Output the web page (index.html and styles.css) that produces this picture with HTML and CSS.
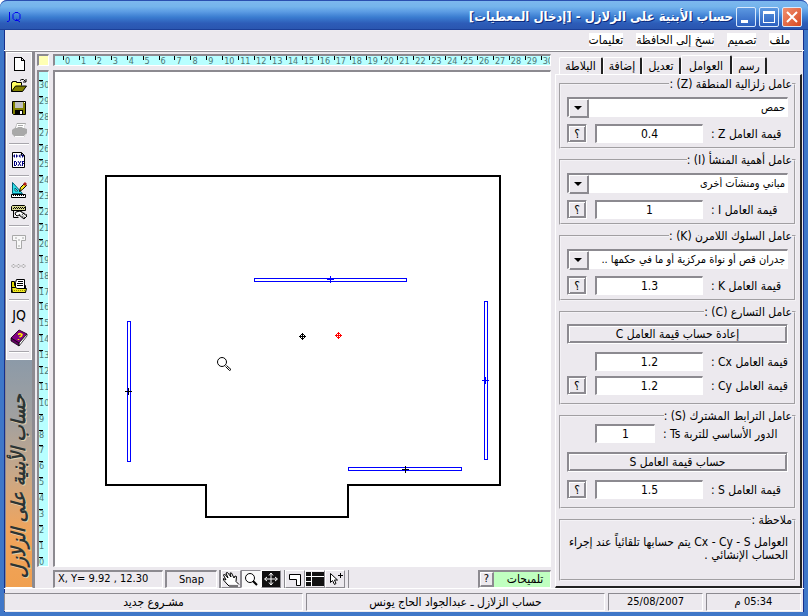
FILE: index.html
```html
<!DOCTYPE html>
<html lang="ar">
<head>
<meta charset="utf-8">
<title>حساب الأبنية على الزلازل</title>
<link rel="stylesheet" href="styles.css">
</head>
<body>
<div class="window">
  <header class="titlebar" dir="rtl">
    <div class="winbuttons">
      <button class="wb close" aria-label="إغلاق"><svg viewBox="0 0 18 18"><path d="M4 4l10 10M14 4L4 14" stroke="#fff" stroke-width="2"/></svg></button>
      <button class="wb" aria-label="تكبير"><svg viewBox="0 0 18 18"><path d="M3 3h12v12H3zM4 6h10v8H4z" fill="#fff" fill-rule="evenodd"/></svg></button>
      <button class="wb" aria-label="تصغير"><svg viewBox="0 0 18 18"><path d="M4 12h7v3H4z" fill="#fff"/></svg></button>
    </div>
    <h1>حساب الأبنية على الزلازل - [إدخال المعطيات]</h1>
    <svg class="logo" viewBox="0 0 16 14" fill="none" stroke="#0000f0"><path d="M3.500 2v8l-1 1.500H1M9 2.500h3l2 2v4l-2 2H9l-2-2v-4zM10 9l4 3"/></svg>
  </header>

  <nav class="menubar" dir="rtl">
    <button>ملف</button><button>تصميم</button><button>نسخ إلى الحافظة</button><button>تعليمات</button>
  </nav>

  <main class="main">
    <aside class="side">
      <div class="toolbar">
        <button aria-label="جديد"><svg viewBox="0 0 18 18" shape-rendering="crispEdges"><path d="M4.500 2.500h7l3 3v9.500h-10zM11.500 2.500v3h3" fill="#fff" stroke="#000"/></svg></button>
        <button aria-label="فتح"><svg viewBox="0 0 18 18"><path d="M1.500 14.500v-9h1v-1h4v1h5v3" fill="#ffff60" stroke="#000"/><path d="M1.500 14.500l4-5.500h11l-4 5.500z" fill="#808000" stroke="#000"/><path d="M10 3.500l1.500-1h2l2 2M16 2v3h-3" fill="none" stroke="#000"/></svg></button>
        <button aria-label="حفظ"><svg viewBox="0 0 18 18"><path d="M2.500 2.500h13v13h-12l-1-1z" fill="#808000" stroke="#000"/><path d="M5 3h8v6H5z" fill="#c0c0c0"/><path d="M5 11h8v4H5z" fill="#000"/><path d="M10 12h2v3h-2zM14 3h1v1h-1z" fill="#fff"/></svg></button>
        <button aria-label="طباعة" disabled><svg viewBox="0 0 18 18"><path d="M3 8l2-1 2-5h9l-2 5 3 1v5l-3 3H5l-3-3V9z" fill="#a9a9a9"/><path d="M7 3h8l-1 4H6z" fill="#fff"/><path d="M8 4.500h5M7.500 6.500h5" stroke="#a9a9a9"/><path d="M5 15.500h9l3-3" stroke="#fff" fill="none"/></svg></button>
        <hr>
        <button class="mid" aria-label="DXF"><svg viewBox="0 0 18 18"><path d="M2.500 1.500h9l3 3v12h-12z" fill="#fff" stroke="#000"/><path d="M11.500 1.500v3h3" fill="none" stroke="#000"/><path d="M3 5l2-2v4zM8 5L6 3v4zM8.500 5l2-2v4zM14 5l-2-2v4z" fill="#000080"/><path d="M4.500 10v5M4 10.500h2M4 14.500h2M6.500 11v3M8 10l3 5M11 10l-3 5M12.500 10v5M12 10.500h2M12 12.500h2" stroke="#000080"/></svg></button>
        <hr>
        <button aria-label="رسم"><svg viewBox="0 0 18 18"><path d="M2.500 1.500v11h10z" fill="#30e0e8" stroke="#006078"/><path d="M5 7v3h3z" fill="#fff" stroke="#006078"/><path d="M1.500 13.500h14v3h-14z" fill="#fff" stroke="#000"/><path d="M3.500 14v1M5.500 14v1M7.500 14v1M9.500 14v1M11.500 14v1M13.500 14v1" stroke="#000"/><path d="M9.500 10.500l1-4 4-4 2 2-4 4z" fill="#f0e020" stroke="#000"/><path d="M13 3l2-2 2 2-2 2z" fill="#b01818"/></svg></button>
        <button aria-label="تحرير"><svg viewBox="0 0 18 18"><path d="M1.500 3.500l1-1h12l1 1v4h-14z" fill="#d8d890" stroke="#000"/><path d="M3 5.500h12M4 4.500h11" stroke="#000" stroke-dasharray="1 1"/><path d="M3.500 8v6.500h5" fill="none" stroke="#000"/><path d="M6 9l4-1 7 5-3 3-5-4-2 1-2-2z" fill="#fff" stroke="#000"/><path d="M9 11l5 4M11 8l6 4M12 11l3 4" stroke="#000" stroke-dasharray="1 1"/></svg></button>
        <hr>
        <button class="mid" aria-label="نص" disabled><svg viewBox="0 0 18 18"><path d="M2.500 2.500h13v5h-4v8h-5v-8h-4z" fill="#f8f8f8" stroke="#a8a8a8"/><path d="M5 5h2M12 5h2M9 6v2M9 12v2" stroke="#a8a8a8"/></svg></button>
        <button class="short" aria-label="نقاط" disabled><svg viewBox="0 0 18 18"><g fill="none" stroke="#a8a8a8"><path d="M3 8.500h1l1 1v1l-1 1H3l-1-1v-1zM8 8.500h1l1 1v1l-1 1H8l-1-1v-1zM13 8.500h1l1 1v1l-1 1h-1l-1-1v-1z"/></g></svg></button>
        <button aria-label="مجلد"><svg viewBox="0 0 18 18"><path d="M1.500 15.500v-11h3v4h11v7z" fill="#e0d800" stroke="#000"/><path d="M6.500 2.500h8v9h-9v-6z" fill="#fff" stroke="#000"/><path d="M8 4.500h5M7 6.500h6M7 8.500h6" stroke="#000"/><path d="M2.500 15.500l-1-5h4l2 1h9l-1 4z" fill="#f0e820" stroke="#000"/><path d="M4 13.500h11" stroke="#908800" stroke-dasharray="1 1"/></svg></button>
        <hr>
        <button class="text">JQ</button>
        <button aria-label="تعليمات"><svg viewBox="0 0 18 18"><path d="M1 9l8-8 8 4-8 9z" fill="#800080" stroke="#300030"/><path d="M9 14l8-9v2l-8 10z" fill="#fff" stroke="#000" stroke-width=".7"/><path d="M1 9l8 5v3L1 12z" fill="#600060" stroke="#000" stroke-width=".7"/><path d="M8 5.500l2-1 2 1-.5 1.500-2 1M8.500 10v1" fill="none" stroke="#ffe800" stroke-width="1.500"/></svg></button>
        <hr>
      </div>
      <div class="banner"><svg viewBox="0 0 26 222"><text transform="translate(20 219) rotate(-90)" class="shade">حساب الأبنية على الزلازل</text><text transform="translate(19 218) rotate(-90)">حساب الأبنية على الزلازل</text></svg></div>
    </aside>

    <section class="work">
      <div class="corner"></div>
      <ol class="ruler hr"></ol>
      <ol class="ruler vr"></ol>
      <div class="canvas">
        <svg viewBox="55 72 495 494" shape-rendering="crispEdges" fill="none">
          <path d="M106 176H500V485H348V517H206V485H106Z" stroke="#000" stroke-width="2"/>
          <g stroke="#00f"><path d="M254.500 278.500h152v3h-152zM127.500 321.500h3v140h-3zM484.500 301.500h3v158h-3zM348.500 467.500h113v3h-113z"/><path d="M330.500 276v7M327 279.500h7M485.500 377v7M482 380.500h7"/></g>
          <path d="M128.500 388v7M125 391.500h7M405.500 466v7M402 469.500h7" stroke="#000"/>
          <path d="M302.500 333v7M299 336.500h7M301 334.500h3M301 338.500h3M300.500 335v3M304.500 335v3" stroke="#000"/>
          <path d="M338.500 332v7M335 335.500h7M337 333.500h3M337 337.500h3M336.500 334v3M340.500 334v3" stroke="#f00"/>
          <g stroke="#000" shape-rendering="auto"><circle cx="222" cy="362" r="4.500"/><path d="M225.500 366.500l4 4 1.500-1-4.500-4"/></g>
        </svg>
      </div>
      <div class="bottombar">
        <output class="sunk coords">X, Y= 9.92 , 12.30</output>
        <button class="sunk snap">Snap</button>
        <div class="tools">
          <button aria-label="تحريك"><svg viewBox="0 0 18 16"><path d="M5 13L1.500 9V7.500L4 9 1.500 4l1-1L6 7 4 2l1.500-.5L9 6 8 2h1.500L12 7l1-2 1.500.5-.5 5 3 3" fill="#fff" stroke="#000"/><path d="M5 13l2 2h9" stroke="#000" fill="none"/></svg></button>
          <button class="on" aria-label="تكبير"><svg viewBox="0 0 18 16"><circle cx="8" cy="7" r="4.500" fill="#fff" stroke="#000"/><path d="M11 10l4 4" stroke="#000" stroke-width="2"/></svg></button>
          <button aria-label="ملاءمة"><svg viewBox="0 0 18 16"><path d="M0 0h18v16H0z" fill="#111"/><path d="M9 2v12M3 8h12M7 4.500L9 2l2 2.500M7 11.500L9 14l2-2.500M5 6L2.500 8 5 10M13 6l2.500 2L13 10" stroke="#fff" fill="none"/></svg></button>
          <i></i>
          <button aria-label="مسقط"><svg viewBox="0 0 18 16"><path d="M3.500 3.500h11v11h-4v-6h-7z" fill="#fff" stroke="#000"/></svg></button>
          <button aria-label="شبكة"><svg viewBox="0 0 18 16" shape-rendering="crispEdges"><path d="M0 1h18v14H0z" fill="#111"/><path d="M5.500 1v14M0 5.500h18M0 10.500h5" stroke="#fff"/></svg></button>
          <button aria-label="تحديد"><svg viewBox="0 0 18 16"><path d="M4.500 2.500v9l2-2 2 4 1.500-1-1.500-3.500h3z" fill="#fff" stroke="#000"/><path d="M12 4.500h5M14.500 2v5" stroke="#000"/></svg></button>
          <i></i>
        </div>
        <div class="sunk tips"><button class="tipq">?</button><button class="tiptext">تلميحات</button></div>
      </div>
    </section>

    <section class="props" dir="rtl">
      <div class="tabs" role="tablist">
        <button role="tab">رسم</button><button role="tab" class="active" aria-selected="true">العوامل</button><button role="tab">تعديل</button><button role="tab">إضافة</button><button role="tab">البلاطة</button>
      </div>
      <div class="page">
        <fieldset>
          <legend>عامل زلزالية المنطقة (Z) :</legend>
          <div class="combo"><select aria-label="عامل زلزالية المنطقة"><option>حمص</option></select></div>
          <div class="row"><label for="z">قيمة العامل Z :</label><input id="z" value="0.4"><button class="bevel">؟</button></div>
        </fieldset>
        <fieldset>
          <legend>عامل أهمية المنشأ (I) :</legend>
          <div class="combo"><select aria-label="عامل أهمية المنشأ"><option>مباني ومنشآت أخرى</option></select></div>
          <div class="row"><label for="i">قيمة العامل I :</label><input id="i" value="1"><button class="bevel">؟</button></div>
        </fieldset>
        <fieldset>
          <legend>عامل السلوك اللامرن (K) :</legend>
          <div class="combo"><select aria-label="عامل السلوك اللامرن"><option>جدران قص أو نواة مركزية أو ما في حكمها ..</option></select></div>
          <div class="row"><label for="k">قيمة العامل K :</label><input id="k" value="1.3"><button class="bevel">؟</button></div>
        </fieldset>
        <fieldset class="tall">
          <legend>عامل التسارع (C) :</legend>
          <button class="bevel wide">إعادة حساب قيمة العامل C</button>
          <div class="row"><label for="cx">قيمة العامل Cx :</label><input id="cx" value="1.2"></div>
          <div class="row near"><label for="cy">قيمة العامل Cy :</label><input id="cy" value="1.2"><button class="bevel">؟</button></div>
        </fieldset>
        <fieldset class="tall raised">
          <legend>عامل الترابط المشترك (S) :</legend>
          <div class="row ts"><label for="ts">الدور الأساسي للتربة Ts :</label><input id="ts" value="1"></div>
          <button class="bevel wide">حساب قيمة العامل S</button>
          <div class="row"><label for="s">قيمة العامل S :</label><input id="s" value="1.5"><button class="bevel">؟</button></div>
        </fieldset>
        <fieldset class="note">
          <legend>ملاحظة :</legend>
          <p>العوامل Cx - Cy - S يتم حسابها تلقائياً عند إجراء الحساب الإنشائي .</p>
        </fieldset>
      </div>
    </section>
  </main>

  <footer class="status" dir="rtl">
    <span class="time">05:34 م</span><span class="date">25/08/2007</span><span>حساب الزلازل ـ عبدالجواد الحاج يونس</span><span>مشـروع جديد</span>
  </footer>
</div>
<script src="script.js"></script>
</body>
</html>
```
FILE: script.js
```js
// Rulers run from 0 to 30 metres; the vertical one counts downwards.
const [across, down] = document.querySelectorAll('.ruler');
for (let n = 0; n <= 30; n++) {
  across.appendChild(document.createElement('li')).textContent = n;
  down.appendChild(document.createElement('li')).textContent = 30 - n;
}
```
FILE: styles.css
```css
* { box-sizing: border-box; }
body { margin: 0; }
body, button, input, select {
  font-family: "DejaVu Sans Condensed", "DejaVu Sans", sans-serif;
  font-size: 12px;
  line-height: 14px;
  color: #000;
}
button, input, select { margin: 0; padding: 0; border: 0; border-radius: 0; background: none; }
.window {
  min-height: 100vh;
  display: flex;
  flex-direction: column;
  background: #ece9ee;
  border: 4px solid #3f77c8;
  border-top: 0;
  border-radius: 7px 7px 0 0;
  box-shadow: inset 1px 0 #16308c, inset -1px 0 #16308c;
}

.titlebar {
  display: flex;
  align-items: center;
  height: 30px;
  margin: 0 -4px;
  padding: 3px 6px 0;
  gap: 3px;
  border-radius: 7px 7px 0 0;
  border-top: 1px solid #2a4fb0;
  border-bottom: 1px solid #1b3f98;
  background: linear-gradient(#7db8ee, #74b4ec 20%, #5c9ce4 38%, #3a7cd0 58%, #2d5cb8 80%, #2a56b0);
}
.titlebar h1 {
  flex: 1;
  margin: 0;
  font-size: 13px;
  line-height: 18px;
  color: #fff;
  text-shadow: 1px 1px #0c2a7c;
}
.winbuttons { display: flex; gap: 3px; }
.wb { width: 20px; height: 20px; border: 1px solid #d8e8fc; border-radius: 2px; background: linear-gradient(#5c98e0, #2c60c0); }
.wb svg { display: block; width: 18px; height: 18px; }
.close { background: linear-gradient(135deg, #f09070, #d84820); }
.logo { width: 16px; height: 14px; }

.menubar { display: flex; gap: 13px; height: 20px; padding: 3px 14px 0; }
.menubar button { height: 13px; line-height: 12px; background: #fff; }

.main { flex: 1; display: flex; padding: 0 2px 0 1px; border-top: 1px solid #fff; }
.side {
  width: 28px;
  display: flex;
  flex-direction: column;
  border: 1px solid #8c8a90;
  border-bottom-color: #fff;
}
.toolbar { display: flex; flex-direction: column; align-items: center; padding-bottom: 4px; border: 1px solid #fff; }
.toolbar button { width: 18px; height: 22px; padding: 2px 0; }
.toolbar .mid { height: 26px; padding: 4px 0; }
.toolbar .short { height: 20px; padding: 1px 0; }
.toolbar .text { height: 24px; font-size: 14px; }
.toolbar svg { display: block; width: 18px; height: 18px; }
.toolbar hr { width: 20px; height: 2px; margin: 2px 0; border: 0; background: #a8a6ac; border-bottom: 1px solid #fff; }
.banner { flex: 1; background: linear-gradient(#8c9aa8, #a0a0a0 25%, #c8a888 50%, #f0a45c 75%, #f0a050); }
.banner svg { display: block; width: 26px; height: 222px; }
.banner text { font: italic bold 19px "DejaVu Sans Condensed", sans-serif; fill: #2c3434; }
.banner .shade { fill: #e0d0b0; }

.work {
  flex: 1;
  min-width: 0;
  padding: 2px 4px 0 2px;
  display: grid;
  grid-template-columns: 12px minmax(0, 1fr);
  grid-template-rows: 12px minmax(0, 1fr) 17px;
  gap: 4px;
  border-left: 2px solid #8c8a90;
  border-top: 1px solid #8c8a90;
}
.corner, .ruler, .canvas, .sunk { border: 1px solid #fff; border-top: 2px solid #8c8a90; border-left: 2px solid #8c8a90; }
.corner { background: #ffffb4; }
.ruler { display: flex; margin: 0; list-style: none; overflow: hidden; background: #b8ffff; }
.ruler li { flex: 0 0 calc((100% + 7px) / 31); color: #4c7474; font-size: 9px; line-height: 10px; }
.hr { padding: 0 0 0 8px; }
.hr li { padding-left: 2px; background: linear-gradient(#000, #000) 0 0 / 1px 4px no-repeat; }
.vr { flex-direction: column; padding: 8px 0 0; }
.vr li { background: linear-gradient(#000, #000) 0 0 / 4px 1px no-repeat; }
.canvas { background: #fff; overflow: hidden; }
.canvas svg { display: block; width: 495px; height: 494px; }
.bottombar { grid-column: 2; display: flex; gap: 2px; margin-top: -1px; }
.bottombar, .bottombar button { font-size: 11px; }
.coords { width: 110px; padding: 0 3px; }
.snap { width: 52px; }
.tools { display: flex; border-left: 2px solid #8c8a90; margin-right: auto; }
.tools button { width: 20px; border: 1px solid #fff; border-right-color: #8c8a90; border-bottom-color: #8c8a90; }
.tools .on { border-color: #8c8a90 #fff #fff #8c8a90; background: #f8f8f8; }
.tools svg { display: block; width: 18px; height: 16px; }
.tools i { width: 4px; border-right: 1px solid #8c8a90; }
.tips { display: flex; width: 73px; background: #c0ffc0; }
.bottombar .tipq { width: 14px; background: #ece9ee; border: 1px solid #fff; border-right: 2px solid #8c8a90; border-bottom: 2px solid #8c8a90; line-height: 12px; }
.bottombar .tiptext { flex: 1; padding-left: 6px; font-size: 12px; line-height: 13px; }

.bevel {
  border: 1px solid #fff;
  border-top-color: #8c8a90;
  border-left-color: #8c8a90;
  box-shadow: inset 0 0 0 1px #8c8a90, inset 2px 2px #fff, inset -2px -2px #8c8a90;
  line-height: 12px;
}
.props { width: 247px; padding-top: 2px; display: flex; flex-direction: column; border-top: 1px solid #8c8a90; }
.tabs { display: flex; align-items: flex-end; height: 20px; padding-right: 35px; }
.tabs button { height: 17px; width: 39px; border: 1px solid #fff; border-right: 2px solid #222; border-bottom: 0; border-radius: 2px 2px 0 0; white-space: nowrap; }
.tabs button:first-child { width: 35px; }
.tabs button:last-child { width: 44px; }
.tabs .active { width: 51px; height: 20px; margin-bottom: -1px; background: #ece9ee; }
.page {
  flex: 1;
  display: flex;
  flex-direction: column;
  gap: 4px;
  padding: 2px 4px 5px 3px;
  border: 1px solid #fff;
  border-right: 2px solid #222;
  border-bottom: 2px solid #222;
}
fieldset { min-width: 0; margin: 0; padding: 6px 6px 4px; border: 2px groove #f4f2f6; }
legend { padding: 0; margin-right: -4px; line-height: 14px; }
.combo { position: relative; display: flex; margin-bottom: 7px; }
select, input { appearance: none; background: #fff; border: 1px solid #fff; border-top: 2px solid #8c8a90; border-left: 2px solid #8c8a90; }
select { width: 100%; height: 20px; padding: 0 2px 0 18px; font-size: 11px; }
.combo::before { content: ""; position: absolute; left: 2px; top: 2px; width: 18px; height: 17px; background: #ece9ee; border: 1px solid #fff; box-shadow: inset -1px -1px #8c8a90; border-right-color: #8c8a90; border-bottom-color: #8c8a90; }
.combo::after { content: ""; position: absolute; left: 7px; top: 9px; border: 4px solid transparent; border-top-color: #000; border-bottom: 0; }
.row { display: flex; height: 19px; }
.row label { flex: 1; padding: 3px 0 0 8px; text-align: left; white-space: nowrap; }
.row input { flex: none; width: 108px; margin-left: 28px; text-align: center; }
.row input:not(:last-child) { margin-left: 8px; }
.row .bevel { flex: none; width: 20px; }
.wide { display: block; width: 100%; height: 20px; margin-bottom: 8px; }
.near { margin-top: 5px; }
.ts { margin-bottom: 9px; }
.row.ts input { width: 60px; }
.tall { padding: 5px 6px 8px; }
.raised { padding-top: 1px; }
.note { flex: 1; padding: 9px 6px 4px; }
.note p { margin: 0; line-height: 13px; }

.status { display: flex; gap: 3px; height: 24px; padding: 4px 3px 1px 0; border-top: 1px solid #fff; }
.status span { flex: 1; border: 1px solid #fff; border-top-color: #8c8a90; border-left-color: #8c8a90; text-align: center; line-height: 16px; }
.status .time, .status .date { flex: 0 0 95px; font-size: 11px; }
```
